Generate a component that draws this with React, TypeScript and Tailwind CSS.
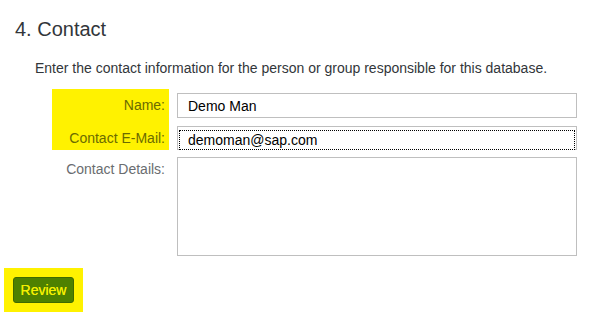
export default function App() {
  return (
    <div className="w-[594px] h-[318px] bg-white font-['Liberation_Sans',Arial,sans-serif] text-[#32363a] overflow-hidden">
      <h2 className="pl-[15px] pt-[17px] text-[20px] leading-[24px]">4. Contact</h2>
      <p className="pl-[35px] mt-[18px] text-[14px] leading-[18px] text-[#32363a]">
        Enter the contact information for the person or group responsible for this database.
      </p>

      <div className="mt-[12px] ml-[52px] grid grid-cols-[117px_400px] gap-x-[8px]">
        <div className="row-span-2 bg-[#fff200] flex flex-col pr-[4px] pt-[4px] text-[14px] text-[#6b6b00]">
          <label className="h-[25px] flex items-center justify-end">Name:</label>
          <label className="h-[24px] mt-[8px] flex items-center justify-end">Contact E-Mail:</label>
        </div>
        <div className="pt-[4px]">
          <input
            defaultValue="Demo Man"
            className="w-full h-[25px] border border-[#bfbfbf] px-[10px] text-[14px] text-[#000] outline-none bg-white"
          />
        </div>
        <div className="pt-[8px]">
          <div className="h-[24px] border border-[#bfbfbf] p-[1px]">
            <input
              defaultValue="demoman@sap.com"
              className="w-full h-full border border-dotted border-[#000] px-[8px] text-[14px] text-[#000] outline-none bg-white"
            />
          </div>
        </div>
        <div className="pt-[9px] pr-[4px] text-right text-[14px] text-[#6a6d70]">
          <span className="leading-[18px]">Contact Details:</span>
        </div>
        <div className="pt-[7px]">
          <textarea className="block w-full h-[99px] border border-[#bfbfbf] resize-none outline-none bg-white" />
        </div>
      </div>

      <div className="mt-[12px] ml-[4px] w-[79px] h-[44px] bg-[#fff200] flex items-center justify-center">
        <button className="w-[61px] h-[26px] rounded-[3px] bg-[#4e8100] border border-[#3f6a00] text-[#f5f000] text-[14px] [text-shadow:0_0_0.4px_#f5f000]">
          Review
        </button>
      </div>
    </div>
  );
}
